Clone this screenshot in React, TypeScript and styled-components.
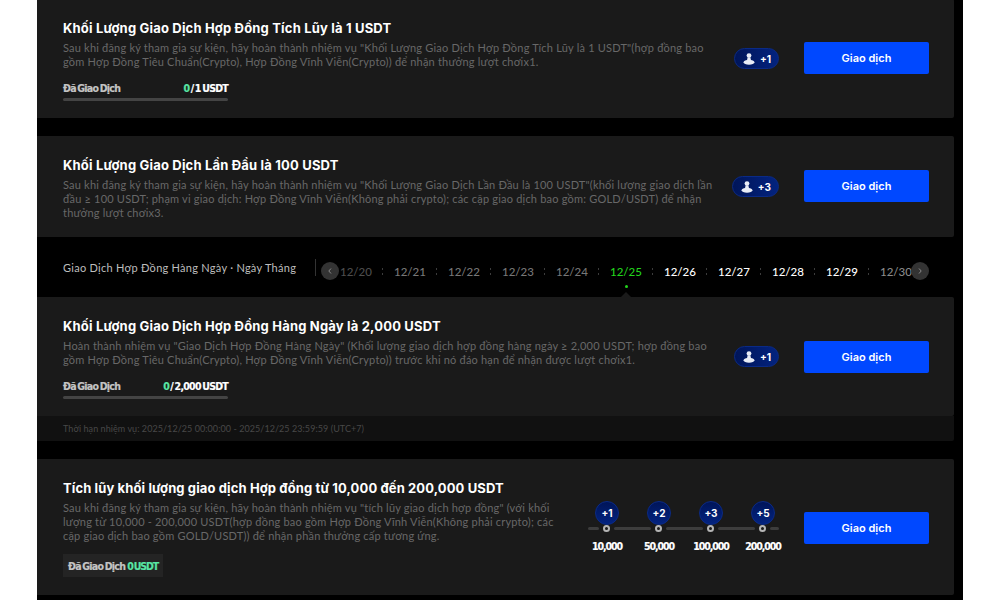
import React from "react";
import styled, { createGlobalStyle } from "styled-components";

const GlobalStyle = createGlobalStyle`
  html, body {
    margin: 0;
    height: 600px;
    overflow: hidden;
    background: #fff;
  }
`;

const Page = styled.main`
  width: 917px;
  margin: -1px 0 0 37px;
  padding: 0 9px 6px 0;
  background: #000;
  display: flex;
  flex-direction: column;
  gap: 18px;
  font-family: Lato, "Noto Sans", sans-serif;
`;

const Card = styled.section`
  display: flex;
  align-items: center;
  padding: 17px 25px 17px 26px;
  background: #1a1a1a;
  border-radius: 0 2px 2px 0;
`;

const Main = styled.div`
  flex: 1;
  min-width: 0;
  padding-top: 3px;
`;

const Title = styled.h3<{ $spacing?: number }>`
  margin: 0;
  font-family: Inter, sans-serif;
  font-size: 13px;
  font-weight: 700;
  line-height: 18px;
  letter-spacing: ${({ $spacing = 0.18 }) => $spacing}px;
  color: #fff;
`;

const Desc = styled.p`
  margin: 4px 0 0;
  font-size: 11px;
  line-height: 14px;
  letter-spacing: 0.2px;
  color: #686868;
  white-space: pre-line;
`;

const Progress = styled.div`
  width: 165px;
  margin-top: 12px;
`;

const ProgressRow = styled.div`
  display: flex;
  justify-content: space-between;
`;

const Narrow = styled.span`
  font-family: "DejaVu Sans Condensed", sans-serif;
  font-size: 10.5px;
  font-weight: 700;
  line-height: 14px;
  letter-spacing: -0.75px;
  word-spacing: -1px;
  color: #c4c4c4;
  -webkit-text-stroke: 0.2px currentColor;
`;

const Amount = styled(Narrow)`
  color: #fff;
`;

const Green = styled.span`
  color: #58e6a4;
  letter-spacing: -1.1px;
`;

const Bar = styled.div`
  height: 3px;
  margin-top: 3px;
  border-radius: 2px;
  background: #444;
`;

const Chip = styled.div`
  display: flex;
  gap: 2px;
  align-items: center;
  width: fit-content;
  height: 23px;
  margin: 11px 0 1px;
  padding: 0 5px;
  background: #242424;
`;

const Badge = styled.div`
  display: flex;
  align-items: center;
  gap: 5px;
  height: 21px;
  padding: 0 7px 0 8px;
  margin-right: 25px;
  box-sizing: border-box;
  border-radius: 11px;
  border: 1px solid #0a2a86;
  background: linear-gradient(90deg, #001559, #03237f);
  color: #fff;
  font-family: Inter, sans-serif;
  font-size: 10px;
  font-weight: 700;
`;

const TradeButton = styled.button<{ $shift?: number }>`
  flex: none;
  width: 125px;
  height: 32px;
  margin: ${({ $shift = 0 }) => (($shift > 0 ? "1px 0 0" : $shift < 0 ? "0 0 1px" : "0"))};
  border: 0;
  border-radius: 2px;
  background: #0048ff;
  color: #fff;
  font-family: Inter, sans-serif;
  font-size: 11px;
  font-weight: 600;
`;

const DailyGroup = styled.div`
  display: flex;
  flex-direction: column;
  margin-top: -18px;
`;

const DateBar = styled.div`
  display: flex;
  align-items: center;
  height: 60px;
  padding: 0 25px 0 26px;
`;

const DateLabel = styled.div`
  width: 252px;
  flex: none;
  font-size: 11px;
  letter-spacing: 0.27px;
  color: #bdbdbd;
`;

const Divider = styled.div`
  width: 1px;
  height: 17px;
  margin-right: 5px;
  background: #333;
`;

const Strip = styled.div`
  position: relative;
  flex: 1;
  display: flex;
  height: 60px;
  padding-left: 8px;
  overflow: hidden;
`;

const tones = { past: "#777", old: "#4d4d4d", today: "#22d41c", next: "#fff", fade: "#8a8a8a" };

const DateItem = styled.div<{ $tone: keyof typeof tones }>`
  position: relative;
  flex: none;
  width: 54px;
  line-height: 69px;
  text-align: center;
  font-size: 11.5px;
  font-weight: 500;
  color: ${({ $tone }) => tones[$tone]};

  &::after {
    content: "";
    position: absolute;
    right: 0;
    top: 31px;
    width: 1px;
    height: 7px;
    background: repeating-linear-gradient(#3c3c3c 0 2px, transparent 2px 5px);
  }
`;

const TodayDot = styled.i`
  position: absolute;
  left: 26px;
  top: 48px;
  width: 3px;
  height: 3px;
  border-radius: 50%;
  background: #22d41c;
`;

const TodayPointer = styled.i`
  position: absolute;
  left: 22px;
  bottom: 0;
  border: 5px solid transparent;
  border-top: 0;
  border-bottom-color: #1a1a1a;
`;

const Arrow = styled.div<{ $side: "left" | "right" }>`
  position: absolute;
  top: 25px;
  ${({ $side }) => ($side === "left" ? "left: 0;" : "right: 0;")}
  width: 18px;
  height: 18px;
  border-radius: 50%;
  display: flex;
  align-items: center;
  justify-content: center;
  background: #333;
`;

const Footer = styled.div`
  height: 25px;
  padding: 0 26px;
  background: #111;
  font-size: 9px;
  line-height: 25px;
  letter-spacing: 0.06px;
  color: #484848;
  border-radius: 0 0 2px 0;
`;

const Steps = styled.div`
  display: grid;
  grid-template-columns: repeat(4, 52px);
  flex: none;
  margin-right: 15px;
  justify-items: center;
`;

const Bubble = styled.div`
  width: 24px;
  height: 24px;
  box-sizing: border-box;
  display: flex;
  align-items: center;
  justify-content: center;
  border-radius: 50%;
  border: 1px solid #0a2a86;
  background: linear-gradient(180deg, #001559, #03237f);
  color: #fff;
  font-family: Inter, sans-serif;
  font-size: 10px;
  font-weight: 700;
`;

const Track = styled.div`
  grid-column: 1 / -1;
  justify-self: start;
  display: flex;
  align-items: center;
  margin: 0 0 0 7px;
  height: 7px;
`;

const Segment = styled.div<{ $w: number }>`
  width: ${({ $w }) => $w}px;
  height: 3px;
  border-radius: 2px;
  background: #3d3d3d;
`;

const Node = styled.div`
  width: 7px;
  height: 7px;
  margin: 0 4px;
  box-sizing: border-box;
  border-radius: 50%;
  border: 2px solid #b5b5b5;
  background: #1a1a1a;
`;

const StepLabel = styled(Narrow)`
  margin-top: 7px;
  letter-spacing: -1.05px;
  color: #fff;
`;

const UserIcon = () => (
  <svg width="12" height="12" viewBox="0 0 12 12" fill="#e8ecf6">
    <circle cx="6" cy="2.6" r="2.4" />
    <path d="M4.6 4.6h2.8l.6 2.7H4z" />
    <ellipse cx="6" cy="9.2" rx="5.4" ry="2.5" />
  </svg>
);

const Chevron = ({ dir }: { dir: "left" | "right" }) => (
  <svg width="6" height="8" viewBox="0 0 6 8" fill="none" stroke="#8a8a8a" strokeWidth="1">
    <path d={dir === "left" ? "M4 1.5 1.8 4 4 6.5" : "M2 1.5 4.2 4 2 6.5"} />
  </svg>
);

const Reward = ({ value }: { value: string }) => (
  <Badge>
    <UserIcon />
    {value}
  </Badge>
);

const dates: { label: string; tone: keyof typeof tones }[] = [
  { label: "12/20", tone: "old" },
  { label: "12/21", tone: "past" },
  { label: "12/22", tone: "past" },
  { label: "12/23", tone: "past" },
  { label: "12/24", tone: "past" },
  { label: "12/25", tone: "today" },
  { label: "12/26", tone: "next" },
  { label: "12/27", tone: "next" },
  { label: "12/28", tone: "next" },
  { label: "12/29", tone: "next" },
  { label: "12/30", tone: "fade" },
];

const tiers = [
  { reward: "+1", amount: "10,000" },
  { reward: "+2", amount: "50,000" },
  { reward: "+3", amount: "100,000" },
  { reward: "+5", amount: "200,000" },
];

export default function App() {
  return (
    <>
      <GlobalStyle />
      <Page>
        <Card>
          <Main>
            <Title>Khối Lượng Giao Dịch Hợp Đồng Tích Lũy là 1 USDT</Title>
            <Desc>
              {'Sau khi đăng ký tham gia sự kiện, hãy hoàn thành nhiệm vụ "Khối Lượng Giao Dịch Hợp Đồng Tích Lũy là 1 USDT"(hợp đồng bao\ngồm Hợp Đồng Tiêu Chuẩn(Crypto), Hợp Đồng Vĩnh Viễn(Crypto)) để nhận thưởng lượt chơix1.'}
            </Desc>
            <Progress>
              <ProgressRow>
                <Narrow>Đã Giao Dịch</Narrow>
                <Amount>
                  <Green>0</Green> / 1 USDT
                </Amount>
              </ProgressRow>
              <Bar />
            </Progress>
          </Main>
          <Reward value="+1" />
          <TradeButton $shift={-1}>Giao dịch</TradeButton>
        </Card>

        <Card>
          <Main>
            <Title>Khối Lượng Giao Dịch Lần Đầu là 100 USDT</Title>
            <Desc>
              {'Sau khi đăng ký tham gia sự kiện, hãy hoàn thành nhiệm vụ "Khối Lượng Giao Dịch Lần Đầu là 100 USDT"(khối lượng giao dịch lần\nđầu ≥ 100 USDT; phạm vi giao dịch: Hợp Đồng Vĩnh Viễn(Không phải crypto); các cặp giao dịch bao gồm: GOLD/USDT) để nhận\nthưởng lượt chơix3.'}
            </Desc>
          </Main>
          <Reward value="+3" />
          <TradeButton $shift={-1}>Giao dịch</TradeButton>
        </Card>

        <DailyGroup>
          <DateBar>
            <DateLabel>Giao Dịch Hợp Đồng Hàng Ngày · Ngày Tháng</DateLabel>
            <Divider />
            <Strip>
              {dates.map((d) => (
                <DateItem key={d.label} $tone={d.tone}>
                  {d.label}
                  {d.tone === "today" && (
                    <>
                      <TodayDot />
                      <TodayPointer />
                    </>
                  )}
                </DateItem>
              ))}
              <Arrow $side="left">
                <Chevron dir="left" />
              </Arrow>
              <Arrow $side="right">
                <Chevron dir="right" />
              </Arrow>
            </Strip>
          </DateBar>
          <Card>
            <Main>
              <Title>Khối Lượng Giao Dịch Hợp Đồng Hàng Ngày là 2,000 USDT</Title>
              <Desc>
                {'Hoàn thành nhiệm vụ "Giao Dịch Hợp Đồng Hàng Ngày" (Khối lượng giao dịch hợp đồng hàng ngày ≥ 2,000 USDT; hợp đồng bao\ngồm Hợp Đồng Tiêu Chuẩn(Crypto), Hợp Đồng Vĩnh Viễn(Crypto)) trước khi nó đáo hạn để nhận được lượt chơix1.'}
              </Desc>
              <Progress>
                <ProgressRow>
                  <Narrow>Đã Giao Dịch</Narrow>
                  <Amount>
                    <Green>0</Green> / 2,000 USDT
                  </Amount>
                </ProgressRow>
                <Bar />
              </Progress>
            </Main>
            <Reward value="+1" />
            <TradeButton>Giao dịch</TradeButton>
          </Card>
          <Footer>Thời hạn nhiệm vụ: 2025/12/25 00:00:00 - 2025/12/25 23:59:59 (UTC+7)</Footer>
        </DailyGroup>

        <Card>
          <Main>
            <Title $spacing={0.12}>Tích lũy khối lượng giao dịch Hợp đồng từ 10,000 đến 200,000 USDT</Title>
            <Desc>
              {'Sau khi đăng ký tham gia sự kiện, hãy hoàn thành nhiệm vụ "tích lũy giao dịch hợp đồng" (với khối\nlượng từ 10,000 - 200,000 USDT(hợp đồng bao gồm Hợp Đồng Vĩnh Viễn(Không phải crypto); các\ncặp giao dịch bao gồm GOLD/USDT)) để nhận phần thưởng cấp tương ứng.'}
            </Desc>
            <Chip>
              <Narrow>Đã Giao Dịch</Narrow>
              <Narrow>
                <Green>0 USDT</Green>
              </Narrow>
            </Chip>
          </Main>
          <Steps>
            {tiers.map((t) => (
              <Bubble key={t.reward}>{t.reward}</Bubble>
            ))}
            <Track>
              <Segment $w={11} />
              <Node />
              <Segment $w={37} />
              <Node />
              <Segment $w={37} />
              <Node />
              <Segment $w={37} />
              <Node />
              <Segment $w={9} />
            </Track>
            {tiers.map((t) => (
              <StepLabel key={t.amount}>{t.amount}</StepLabel>
            ))}
          </Steps>
          <TradeButton $shift={1}>Giao dịch</TradeButton>
        </Card>
      </Page>
    </>
  );
}
